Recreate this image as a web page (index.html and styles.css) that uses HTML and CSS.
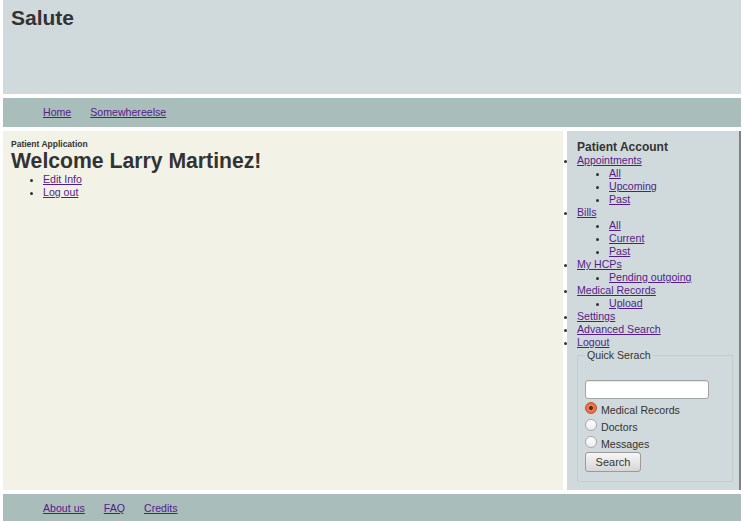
FILE: index.html
```html
<!DOCTYPE html>
<html>
<head>
<meta charset="utf-8">
<title>Salute</title>
<link rel="stylesheet" href="styles.css">
</head>
<body>
<div class="page">
  <header class="header">
    <h1 class="site-title">Salute</h1>
  </header>
  <nav class="bar">
    <ul class="bar-links">
      <li><a href="#">Home</a></li>
      <li><a href="#">Somewhereelse</a></li>
    </ul>
  </nav>
  <div class="content">
    <main class="main">
      <div class="app-name">Patient Application</div>
      <h1 class="welcome">Welcome Larry Martinez!</h1>
      <ul class="main-links">
        <li><a href="#">Edit Info</a></li>
        <li><a href="#">Log out</a></li>
      </ul>
    </main>
    <aside class="sidebar">
      <h3 class="side-title">Patient Account</h3>
      <ul class="side-list">
        <li><a href="#">Appointments</a>
          <ul class="sub-list">
            <li><a href="#">All</a></li>
            <li><a href="#">Upcoming</a></li>
            <li><a href="#">Past</a></li>
          </ul>
        </li>
        <li><a href="#">Bills</a>
          <ul class="sub-list">
            <li><a href="#">All</a></li>
            <li><a href="#">Current</a></li>
            <li><a href="#">Past</a></li>
          </ul>
        </li>
        <li><a href="#">My HCPs</a>
          <ul class="sub-list">
            <li><a href="#">Pending outgoing</a></li>
          </ul>
        </li>
        <li><a href="#">Medical Records</a>
          <ul class="sub-list">
            <li><a href="#">Upload</a></li>
          </ul>
        </li>
        <li><a href="#">Settings</a></li>
        <li><a href="#">Advanced Search</a></li>
        <li><a href="#">Logout</a></li>
      </ul>
      <fieldset class="quick">
        <legend>Quick Serach</legend>
        <input class="q-input" type="text">
        <label class="q-opt"><input type="radio" name="t" checked><span>Medical Records</span></label>
        <label class="q-opt"><input type="radio" name="t"><span>Doctors</span></label>
        <label class="q-opt"><input type="radio" name="t"><span>Messages</span></label>
        <button class="q-btn" type="button">Search</button>
      </fieldset>
    </aside>
  </div>
  <footer class="bar">
    <ul class="bar-links">
      <li><a href="#">About us</a></li>
      <li><a href="#">FAQ</a></li>
      <li><a href="#">Credits</a></li>
    </ul>
  </footer>
</div>
</body>
</html>
```
FILE: styles.css
```css
* { box-sizing: border-box; }
html, body { margin: 0; padding: 0; background: #ffffff; }
body {
  font-family: "Liberation Sans", Arial, sans-serif;
  font-size: 10.6px;
  color: #333333;
}
a { color: #551a8b; text-decoration: underline; }

.page {
  display: flex;
  flex-direction: column;
  gap: 4px;
  padding: 0 2px 0 3px;
}

.header {
  background: #d0dadc;
  height: 94px;
  padding: 6px 8px;
}
.site-title {
  margin: 0;
  font-size: 21px;
  font-weight: bold;
  color: #333333;
}

.bar {
  background: #a9bdbb;
  height: 29px;
  padding: 8px 0;
}
.bar-links {
  list-style: none;
  margin: 0;
  padding: 0 0 0 40px;
  display: flex;
  gap: 19px;
  line-height: 13px;
}

.content {
  display: flex;
  gap: 4px;
}
.main {
  width: 560px;
  background: #f2f2e7;
  padding: 8px;
}
.app-name {
  font-size: 8.5px;
  font-weight: bold;
  line-height: 10px;
}
.welcome {
  margin: 0;
  font-size: 21.2px;
  line-height: 24px;
  font-weight: bold;
}
.main-links {
  margin: 0;
  padding-left: 32px;
  line-height: 13px;
  list-style: disc;
}

.sidebar {
  flex: 1;
  background: #d0dadc;
  border-right: 2px solid #7d8383;
  padding: 8px 6px 8px 10px;
}
.side-title {
  margin: 0;
  padding-top: 1px;
  font-size: 12px;
  line-height: 14px;
  font-weight: bold;
}
.side-list {
  margin: 0;
  padding: 0;
  line-height: 13px;
  list-style: disc;
}
.sub-list {
  margin: 0;
  padding-left: 32px;
  list-style: disc;
}

.quick {
  margin: 0;
  border: 1px solid #c4cccc;
  padding: 0 7px 9px 7px;
  display: flex;
  flex-direction: column;
  align-items: flex-start;
}
.quick legend {
  padding: 0 2px;
  font-size: 10.6px;
  line-height: 13px;
}
.q-input {
  margin: 18px 0 2px 0;
  width: 124px;
  height: 19px;
  border: 1px solid #a0a4a4;
  border-radius: 3px;
  background: #ffffff;
  box-shadow: inset 0 1px 1px rgba(0,0,0,0.1);
}
.q-opt {
  display: flex;
  align-items: flex-start;
  height: 17px;
  line-height: 13px;
}
.q-opt span {
  padding-top: 3px;
}
.q-opt input {
  appearance: none;
  -webkit-appearance: none;
  margin: 1px 4px 0 0;
  width: 12px;
  height: 12px;
  border-radius: 50%;
  border: 1px solid #a8a8a8;
  background: linear-gradient(#ffffff, #ececec);
}
.q-opt input:checked {
  border-color: #c2502a;
  background: radial-gradient(circle, #5a2a1a 0, #5a2a1a 1.6px, #ec7a50 2.2px, #e0683e 100%);
}
.q-btn {
  margin-top: 0;
  height: 20px;
  width: 56px;
  padding: 0;
  font-family: "Liberation Sans", Arial, sans-serif;
  font-size: 11px;
  color: #333333;
  border: 1px solid #9a9a9a;
  border-radius: 3px;
  background: linear-gradient(#f6f6f6, #d6d6d6);
}
```
